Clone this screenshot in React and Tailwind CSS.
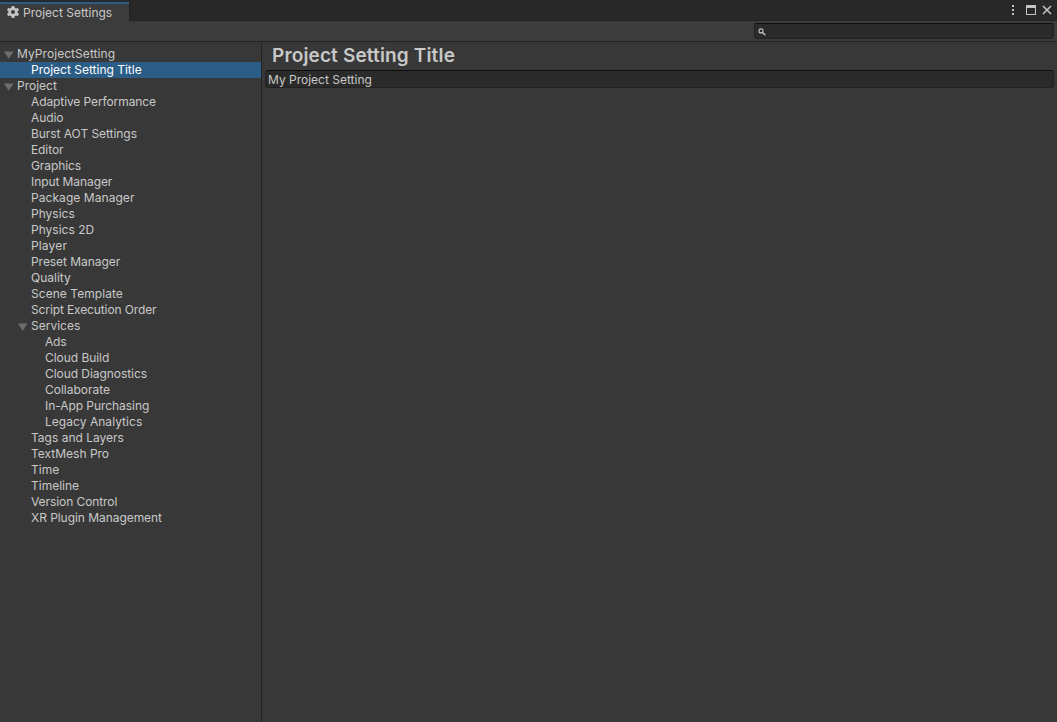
import React from "react";

const items = [
  ["MyProjectSetting", 0, true, "tracking-[0.06px]"],
  ["Project Setting Title", 1],
  ["Project", 0, true],
  ["Adaptive Performance", 1, false, "tracking-[-0.1px]"],
  ["Audio", 1, false, "tracking-[-0.1px]"],
  ["Burst AOT Settings", 1, false, "tracking-[-0.05px]"],
  ["Editor", 1, false, "tracking-[-0.1px]"],
  ["Graphics", 1, false, "tracking-[-0.1px]"],
  ["Input Manager", 1, false, "tracking-[-0.08px]"],
  ["Package Manager", 1, false, "tracking-[0.06px]"],
  ["Physics", 1],
  ["Physics 2D", 1],
  ["Player", 1, false, "tracking-[0.15px]"],
  ["Preset Manager", 1, false, "tracking-[-0.05px]"],
  ["Quality", 1],
  ["Scene Template", 1, false, "tracking-[0.05px]"],
  ["Script Execution Order", 1, false, "tracking-[-0.12px]"],
  ["Services", 1, true],
  ["Ads", 2, false, "tracking-[-0.2px]"],
  ["Cloud Build", 2, false, "tracking-[-0.05px]"],
  ["Cloud Diagnostics", 2, false, "tracking-[-0.06px]"],
  ["Collaborate", 2],
  ["In-App Purchasing", 2, false, "tracking-[-0.06px]"],
  ["Legacy Analytics", 2, false, "tracking-[0.04px]"],
  ["Tags and Layers", 1],
  ["TextMesh Pro", 1],
  ["Time", 1],
  ["Timeline", 1],
  ["Version Control", 1, false, "tracking-[-0.08px]"],
  ["XR Plugin Management", 1, false, "tracking-[-0.05px]"],
];

const indent = ["pl-[3px]", "pl-[17px]", "pl-[31px]"];

function Gear() {
  return (
    <svg width="12" height="12" viewBox="0 0 12 12" fill="none" stroke="#c4c4c4" className="mt-[2px]">
      <circle cx="6" cy="6" r="3.4" strokeWidth="2.7" />
      <path
        d="M6 0v2.2M6 9.8V12M.6 2.9l2.1 1.2M9.3 7.9l2.1 1.2M.6 9.1l2.1-1.2M9.3 4.1l2.1-1.2"
        strokeWidth="2.8"
      />
    </svg>
  );
}

function TreeRow({ label, level, open, selected, tracking = "" }) {
  return (
    <li
      className={`flex h-4 items-center ${indent[level]} ${
        selected ? "bg-[#2c5d87] text-white" : ""
      }`}
    >
      <span className="flex w-[14px] shrink-0 items-center pl-px">
        {open && (
          <svg width="10" height="8" viewBox="0 0 10 8" className="mt-px">
            <path d="M0 0.5h9.4L4.7 7.8z" fill="#6e6e6e" />
          </svg>
        )}
      </span>
      <span className={tracking}>{label}</span>
    </li>
  );
}

export default function App() {
  return (
    <div className="flex h-screen w-full flex-col overflow-hidden bg-[#383838] font-['Inter',sans-serif] text-[12px] leading-4 whitespace-nowrap text-[#c8c8c8]">
      <header className="flex h-[21px] shrink-0 bg-[#282828]">
        <div className="flex w-[129px] flex-col pt-[2px]">
          <div className="h-[2px] bg-[#2c5d87]" />
          <div className="flex flex-1 items-start gap-1 bg-[#3c3c3c] pl-[7px]">
            <Gear />
            <span className="leading-[17px]">Project Settings</span>
          </div>
        </div>
        <div className="flex flex-1 items-start justify-end border-b border-l border-[#232323] pt-[5px] pr-[5px]">
          <svg width="40" height="12" viewBox="0 0 40 12" fill="#c4c4c4">
            <path d="M0 0h2v2H0zM0 4h2v2H0zM0 8h2v2H0z" />
            <path d="M14 0h10v10H14zM15 3v6h8V3z" fillRule="evenodd" />
            <path d="M31 1l8 8M39 1l-8 8" stroke="#c4c4c4" strokeWidth="1.6" />
          </svg>
        </div>
      </header>

      <div className="flex h-[21px] shrink-0 items-start justify-end border-b border-[#232323] bg-[#3c3c3c] pt-[2px] pr-[3px]">
        <div className="flex h-4 w-[300px] items-start rounded-[3px] border border-[#212121] border-t-[#0d0d0d] bg-[#2a2a2a] pt-1 pl-[3px]">
          <svg width="8" height="8" viewBox="0 0 8 8" fill="none" stroke="#c4c4c4">
            <circle cx="3" cy="2.9" r="2" strokeWidth="1.1" />
            <path d="M4.5 4.4L7.4 7.3" strokeWidth="1.4" />
          </svg>
        </div>
      </div>

      <main className="flex min-h-0 flex-1">
        <nav className="w-[262px] shrink-0 border-r border-[#232323] pt-1">
          <ul>
            {items.map(([label, level, open, tracking], i) => (
              <TreeRow
                key={label}
                label={label}
                level={level}
                open={open}
                tracking={tracking}
                selected={i === 1}
              />
            ))}
          </ul>
        </nav>
        <section className="flex min-w-0 flex-1 flex-col pr-[3px] pl-[3px]">
          <h1 className="h-7 pl-[7px] text-[19px] leading-[27px] font-semibold tracking-[0.15px]">
            Project Setting Title
          </h1>
          <div className="h-[18px] rounded-[3px] border border-[#212121] border-t-[#0d0d0d] bg-[#2a2a2a] pl-[2px] leading-[17px]">
            My Project Setting
          </div>
        </section>
      </main>
    </div>
  );
}
